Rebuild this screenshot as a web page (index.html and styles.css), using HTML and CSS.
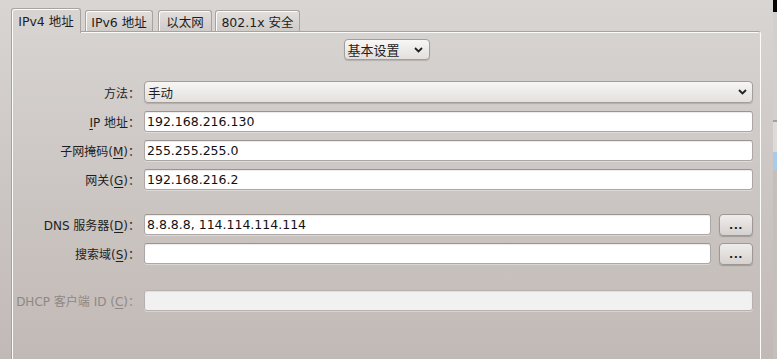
FILE: index.html
```html
<!DOCTYPE html>
<html lang="zh-CN">
<head>
<meta charset="utf-8">
<title>IPv4 地址</title>
<link rel="stylesheet" href="styles.css">
</head>
<body>
<div class="screen">
  <div class="dialog">
    <div class="tabs">
      <div class="tab active tab-ipv4">IPv4 地址</div>
      <div class="tab tab-ipv6">IPv6 地址</div>
      <div class="tab tab-eth">以太网</div>
      <div class="tab tab-sec">802.1x 安全</div>
    </div>
    <div class="panel">
      <div class="mode-row">
        <div class="mode-select">基本设置
          <svg class="chev" width="9" height="6" viewBox="0 0 9 6"><polyline points="1,1 4.5,4.5 8,1" fill="none" stroke="#222" stroke-width="1.8"/></svg>
        </div>
      </div>
      <div class="form">
        <div class="row row-combo">
          <div class="label">方法：</div>
          <div class="combo">手动
            <svg class="chev" width="9" height="6" viewBox="0 0 9 6"><polyline points="1,1 4.5,4.5 8,1" fill="none" stroke="#222" stroke-width="1.8"/></svg>
          </div>
        </div>
        <div class="row">
          <div class="label"><u>I</u>P 地址：</div>
          <input class="field" type="text" value="192.168.216.130">
        </div>
        <div class="row">
          <div class="label">子网掩码(<u>M</u>)：</div>
          <input class="field" type="text" value="255.255.255.0">
        </div>
        <div class="row">
          <div class="label">网关(<u>G</u>)：</div>
          <input class="field" type="text" value="192.168.216.2">
        </div>
        <div class="row row-group">
          <div class="label">DNS 服务器(<u>D</u>)：</div>
          <input class="field" type="text" value="8.8.8.8, 114.114.114.114">
          <div class="more">...</div>
        </div>
        <div class="row">
          <div class="label">搜索域(<u>S</u>)：</div>
          <input class="field" type="text" value="">
          <div class="more">...</div>
        </div>
        <div class="row row-group2 disabled">
          <div class="label">DHCP 客户端 ID (<u>C</u>)：</div>
          <input class="field" type="text" value="" disabled>
        </div>
      </div>
    </div>
  </div>
  <div class="side">
    <div class="s-black"></div>
    <div class="s-light"></div>
    <div class="s-line"></div>
    <div class="s-pale"></div>
    <div class="s-blue"></div>
    <div class="s-rest"></div>
  </div>
</div>
</body>
</html>
```
FILE: styles.css
```css
* { box-sizing: border-box; }
html, body { margin: 0; padding: 0; }
body {
  width: 777px;
  height: 359px;
  overflow: hidden;
  font-family: "DejaVu Sans", "Noto Sans CJK SC", sans-serif;
  font-size: 12.5px;
  color: #1e1e1e;
}
.screen { display: flex; width: 777px; height: 359px; }
.dialog {
  width: 773px;
  height: 359px;
  background: linear-gradient(#d8d5d2, #c1b9b6);
  padding-top: 8px;
}
.tabs {
  display: flex;
  align-items: flex-end;
  margin-left: 11px;
  height: 23px;
  position: relative;
  z-index: 1;
}
.tab {
  height: 21px;
  border: 1px solid #a7a39f;
  border-bottom: none;
  border-radius: 3px 3px 0 0;
  box-shadow: inset 1px 1px 0 #fbfbfa;
  background: linear-gradient(#e1dfdd, #cfcbc8);
  display: flex;
  align-items: center;
  justify-content: center;
  white-space: nowrap;
  font-size: 12.5px;
}
.tab.active {
  height: 25px;
  margin-bottom: -2px;
  background: #d6d3d0;
  padding-bottom: 2px;
}
.tab-ipv4 { width: 70px; }
.tab-ipv6 { width: 68px; margin-left: 4px; }
.tab-eth { width: 54px; margin-left: 5px; }
.tab-sec { width: 85px; margin-left: 3px; }

.panel {
  margin-left: 11px;
  width: 750px;
  height: 340px;
  border-top: 1px solid #a7a39f;
  border-left: 1px solid #a7a39f;
  border-right: 1px solid #fbfbfa;
  border-top-right-radius: 3px;
  box-shadow: inset 1px 1px 0 #fbfbfa;
}
.mode-row {
  display: flex;
  justify-content: center;
  padding-top: 7px;
  padding-left: 1px;
}
.mode-select {
  width: 86px;
  height: 21px;
  border: 1px solid #a29e9a;
  border-radius: 4px;
  background: linear-gradient(#f8f7f6, #e2dfdc);
  box-shadow: 0 1px 1px rgba(0,0,0,0.15);
  display: flex;
  align-items: center;
  justify-content: space-between;
  padding: 0 6px 0 3px;
  font-size: 13px;
}
.chev { display: block; }

.form { padding-top: 13px; padding-right: 7px; }
.row {
  display: flex;
  align-items: center;
  height: 21px;
  margin-top: 8px;
}
.row-combo { height: 22px; }
.row-group { margin-top: 24px; }
.row-group2 { margin-top: 26px; }
.label {
  width: 128px;
  margin-right: 4px;
  text-align: right;
  white-space: nowrap;
  flex: none;
  font-size: 12px;
}
.label u { text-underline-offset: 2px; }
.combo {
  flex: 1;
  height: 22px;
  border: 1px solid #a29e9a;
  border-radius: 4px;
  background: linear-gradient(#f7f6f5, #e3e0dd);
  box-shadow: 0 1px 1px rgba(0,0,0,0.15);
  display: flex;
  align-items: center;
  justify-content: space-between;
  padding: 0 5px 0 3px;
}
.field {
  flex: 1;
  min-width: 0;
  height: 21px;
  margin: 0;
  border: 1px solid #aca7a4;
  border-top-color: #9a9591;
  border-radius: 3px;
  background: #fff;
  box-shadow: inset 0 1px 1px rgba(0,0,0,0.08), 0 1px 0 rgba(255,255,255,0.35);
  font: inherit;
  color: #111;
  padding: 0 2px;
  outline: none;
}
.more {
  flex: none;
  width: 34px;
  height: 22px;
  margin-left: 8px;
  border: 1px solid #9d9895;
  border-radius: 4px;
  background: linear-gradient(#efedeb, #d5d1ce);
  box-shadow: 0 1px 1px rgba(0,0,0,0.2);
  display: flex;
  align-items: center;
  justify-content: center;
  font-weight: bold;
  font-size: 11px;
  padding-top: 2px;
  letter-spacing: 0.5px;
}
.disabled .label { color: #8e8884; }
.disabled .field {
  background: #f1f1f1;
  border-color: #b6b1ae;
}

.side { width: 4px; display: flex; flex-direction: column; }
.s-black { height: 12px; background: #050505; }
.s-light { height: 108px; background: #d3cfcc; }
.s-line { height: 2px; background: #a29e9b; }
.s-pale { height: 30px; background: #dedad7; }
.s-blue { height: 18px; background: #a7cbea; }
.s-rest { flex: 1; background: #c5bfbc; }
```
